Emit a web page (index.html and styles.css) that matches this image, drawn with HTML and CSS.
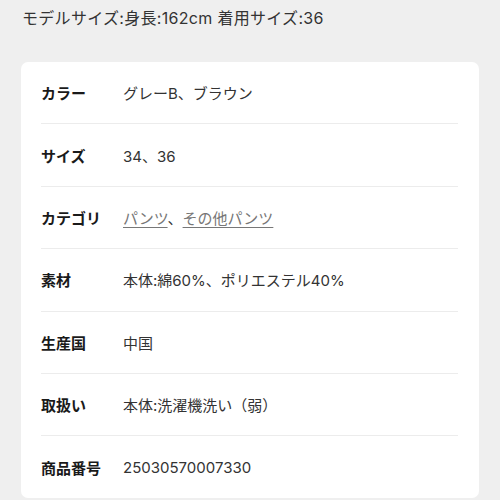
FILE: index.html
```html
<!DOCTYPE html>
<html lang="ja">
<head>
  <meta charset="UTF-8">
  <meta name="viewport" content="width=device-width, initial-scale=1.0">
  <title>商品詳細</title>
  <link rel="stylesheet" href="styles.css">
</head>
<body>
  <div class="page">
    <p class="model-size">モデルサイズ:身長:162cm 着用サイズ:36</p>

    <!-- 商品スペック -->
    <div class="spec-card">
      <div class="spec-row">
        <div class="spec-label">カラー</div>
        <div class="spec-value">グレーB、ブラウン</div>
      </div>
      <div class="spec-row">
        <div class="spec-label">サイズ</div>
        <div class="spec-value">34、36</div>
      </div>
      <div class="spec-row">
        <div class="spec-label">カテゴリ</div>
        <div class="spec-value"><a href="#" class="spec-link">パンツ</a>、<a href="#" class="spec-link">その他パンツ</a></div>
      </div>
      <div class="spec-row">
        <div class="spec-label">素材</div>
        <div class="spec-value">本体:綿60%、ポリエステル40%</div>
      </div>
      <div class="spec-row">
        <div class="spec-label">生産国</div>
        <div class="spec-value">中国</div>
      </div>
      <div class="spec-row">
        <div class="spec-label">取扱い</div>
        <div class="spec-value">本体:洗濯機洗い（弱）</div>
      </div>
      <div class="spec-row">
        <div class="spec-label">商品番号</div>
        <div class="spec-value">25030570007330</div>
      </div>
    </div>
  </div>
</body>
</html>
```

FILE: styles.css
```css
html, body {
  margin: 0;
  padding: 0;
  background-color: #efefef;
  font-family: Inter, "Noto Sans CJK JP", sans-serif;
  color: #222;
}
.page {
  padding: 6px 21px 0 21px;
}
.model-size {
  margin: 0 0 32px 1px;
  font-size: 16px;
  line-height: 24px;
  color: #333;
  letter-spacing: 0.3px;
}
/* 白いカード */
.spec-card {
  background: #ffffff;
  border-radius: 7px;
  padding: 0 21px 0 20px;
}
.spec-row {
  display: flex;
  align-items: center;
  height: 61.4px;
  border-bottom: 1px solid #ececec;
  font-size: 15px;
}
.spec-row:last-child {
  border-bottom: none;
}
.spec-label {
  width: 82px;
  flex-shrink: 0;
  font-weight: bold;
  color: #1a1a1a;
}
.spec-value {
  color: #333;
}
.spec-link {
  color: #777;
  text-decoration: underline;
  text-underline-offset: 3px;
}
```
